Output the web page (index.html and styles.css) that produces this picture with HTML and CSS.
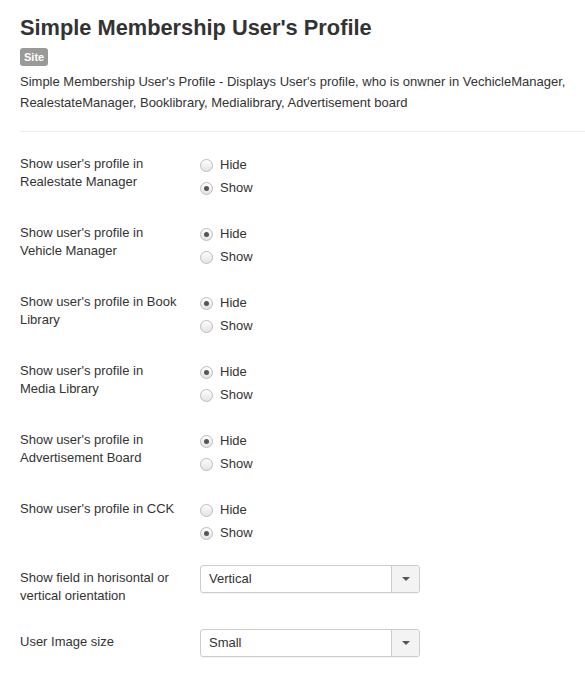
FILE: index.html
```html
<!DOCTYPE html>
<html>
<head>
<meta charset="utf-8">
<link rel="stylesheet" href="styles.css">
</head>
<body>
<div class="page">
  <h1 class="title">Simple Membership User's Profile</h1>
  <span class="badge">Site</span>
  <p class="desc">Simple Membership User's Profile - Displays User's profile, who is onwner in VechicleManager, RealestateManager, Booklibrary, Medialibrary, Advertisement board</p>
  <hr class="sep">
  <div class="form">
    <div class="group">
      <div class="label">Show user's profile in Realestate Manager</div>
      <div class="controls">
        <label class="radio"><span class="dot"></span>Hide</label>
        <label class="radio"><span class="dot on"></span>Show</label>
      </div>
    </div>
    <div class="group">
      <div class="label">Show user's profile in Vehicle Manager</div>
      <div class="controls">
        <label class="radio"><span class="dot on"></span>Hide</label>
        <label class="radio"><span class="dot"></span>Show</label>
      </div>
    </div>
    <div class="group">
      <div class="label">Show user's profile in Book Library</div>
      <div class="controls">
        <label class="radio"><span class="dot on"></span>Hide</label>
        <label class="radio"><span class="dot"></span>Show</label>
      </div>
    </div>
    <div class="group">
      <div class="label">Show user's profile in Media Library</div>
      <div class="controls">
        <label class="radio"><span class="dot on"></span>Hide</label>
        <label class="radio"><span class="dot"></span>Show</label>
      </div>
    </div>
    <div class="group">
      <div class="label">Show user's profile in Advertisement Board</div>
      <div class="controls">
        <label class="radio"><span class="dot on"></span>Hide</label>
        <label class="radio"><span class="dot"></span>Show</label>
      </div>
    </div>
    <div class="group">
      <div class="label">Show user's profile in CCK</div>
      <div class="controls">
        <label class="radio"><span class="dot"></span>Hide</label>
        <label class="radio"><span class="dot on"></span>Show</label>
      </div>
    </div>
    <div class="group sel-group">
      <div class="label">Show field in horisontal or vertical orientation</div>
      <div class="controls">
        <div class="select"><span class="val">Vertical</span><span class="arrow"><span class="caret"></span></span></div>
      </div>
    </div>
    <div class="group sel-group">
      <div class="label">User Image size</div>
      <div class="controls">
        <div class="select"><span class="val">Small</span><span class="arrow"><span class="caret"></span></span></div>
      </div>
    </div>
  </div>
</div>
</body>
</html>
```

FILE: styles.css
```css
html, body {
  margin: 0;
  padding: 0;
  background: #fff;
}
body {
  font-family: "Liberation Sans", Arial, sans-serif;
  font-size: 13px;
  color: #333;
}
.page {
  padding: 12px 0 0 20px;
}
.title {
  margin: 0;
  font-size: 21.8px;
  line-height: 32px;
  font-weight: bold;
  color: #333;
}
.badge {
  display: inline-block;
  margin-top: 4px;
  background: #999;
  color: #fff;
  font-size: 11px;
  font-weight: bold;
  line-height: 18px;
  padding: 0 4px;
  border-radius: 3px;
}
.desc {
  margin: 5px 0 0 0;
  line-height: 21px;
}
.sep {
  margin: 18px 0 0 0;
  border: 0;
  border-top: 1px solid #eee;
  height: 0;
}
.form {
  padding-top: 23px;
}
.group {
  display: flex;
  margin-bottom: 25px;
}
.label {
  width: 160px;
  margin-right: 20px;
  line-height: 18px;
}
.controls {
  display: flex;
  flex-direction: column;
}
.radio {
  display: flex;
  align-items: center;
  height: 23px;
  line-height: 18px;
  margin-top: -2px;
}
.radio + .radio {
  margin-top: 0;
}
.dot {
  box-sizing: border-box;
  width: 13px;
  height: 13px;
  border-radius: 50%;
  border: 1px solid #bdbdbd;
  background: linear-gradient(#fdfdfd, #e4e4e4);
  margin-right: 7px;
  position: relative;
  top: 1px;
}
.dot.on::after {
  content: "";
  position: absolute;
  left: 3px;
  top: 3px;
  width: 5px;
  height: 5px;
  border-radius: 50%;
  background: #555;
}
.sel-group {
  margin-bottom: 28px;
}
.sel-group .select {
  margin-top: -4px;
}
.select {
  box-sizing: border-box;
  width: 220px;
  height: 28px;
  border: 1px solid #ccc;
  border-radius: 3px;
  display: flex;
  box-shadow: 0 1px 1px rgba(0,0,0,0.05);
}
.val {
  flex: 1;
  padding-left: 8px;
  line-height: 26px;
}
.arrow {
  width: 27px;
  border-left: 1px solid #ccc;
  background: #f3f3f3;
  display: flex;
  align-items: center;
  justify-content: center;
  border-radius: 0 2px 2px 0;
}
.caret {
  width: 0;
  height: 0;
  border-left: 4px solid transparent;
  border-right: 4px solid transparent;
  border-top: 4px solid #555;
}
```
